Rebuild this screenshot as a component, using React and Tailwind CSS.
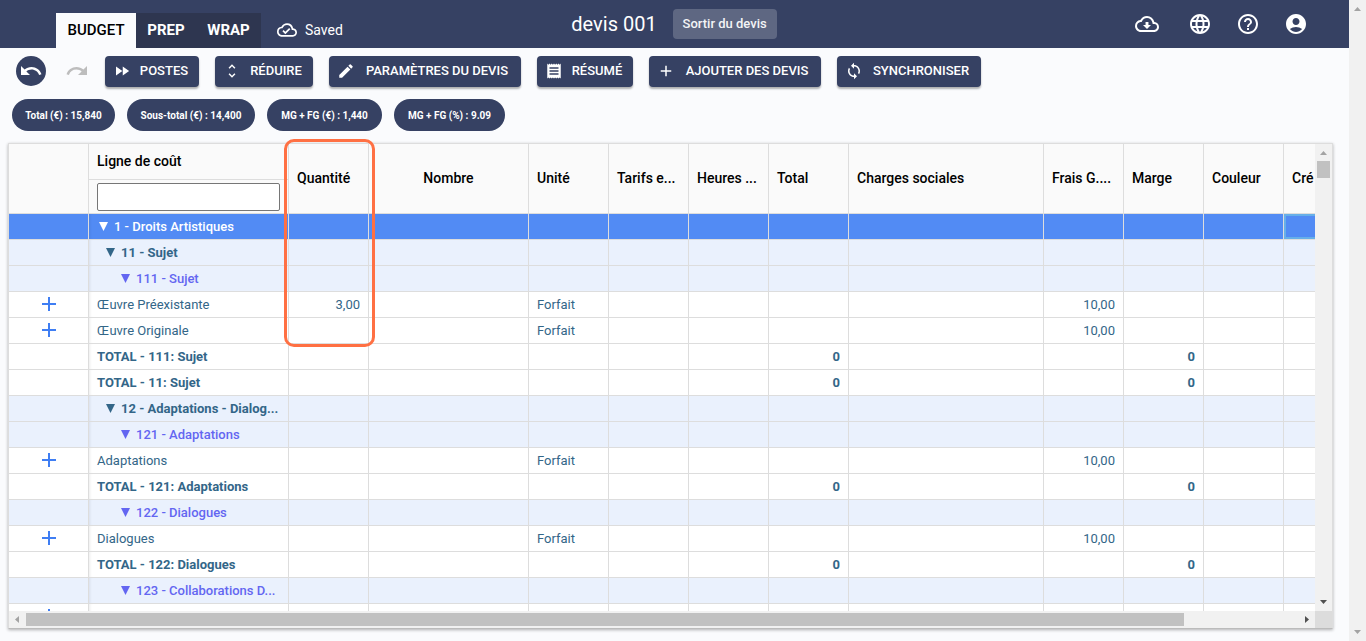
import { useState } from "react"
import clsx from "clsx"
import {
    MdAccountCircle,
    MdAdd,
    MdEdit,
    MdFastForward,
    MdHelpOutline,
    MdLanguage,
    MdOutlineCloudDone,
    MdOutlineCloudDownload,
    MdReceipt,
    MdRedo,
    MdSync,
    MdUndo,
    MdUnfoldMore,
} from "react-icons/md"

const actions = [
    { label: "POSTES", icon: MdFastForward, width: "min-w-[94px]" },
    { label: "RÉDUIRE", icon: MdUnfoldMore, width: "min-w-[98px]" },
    { label: "PARAMÈTRES DU DEVIS", icon: MdEdit, width: "min-w-[192px]" },
    { label: "RÉSUMÉ", icon: MdReceipt, width: "min-w-[96px]" },
    { label: "AJOUTER DES DEVIS", icon: MdAdd, width: "min-w-[172px]" },
    { label: "SYNCHRONISER", icon: MdSync, width: "min-w-[144px]" },
]

const totals = [
    { text: "Total (€) : 15,840", width: "min-w-[103px]" },
    { text: "Sous-total (€) : 14,400", width: "min-w-[128px]" },
    { text: "MG + FG (€) : 1,440", width: "min-w-[115px]" },
    { text: "MG + FG (%) : 9.09", width: "min-w-[111px]" },
]

const columns = [
    { key: "quantity", label: "Quantité", width: "w-[80px]" },
    { key: "number", label: "Nombre", width: "w-[160px]", center: true },
    { key: "unit", label: "Unité", width: "w-[80px]", left: true },
    { key: "rate", label: "Tarifs e...", width: "w-[80px]" },
    { key: "hours", label: "Heures ...", width: "w-[80px]" },
    { key: "total", label: "Total", width: "w-[80px]" },
    { key: "charges", label: "Charges sociales", width: "w-[195px]" },
    { key: "fees", label: "Frais G....", width: "w-[80px]" },
    { key: "margin", label: "Marge", width: "w-[80px]" },
    { key: "color", label: "Couleur", width: "w-[80px]" },
    { key: "credit", label: "Cré", width: "w-[80px]" },
]

const rows = [
    { type: "category", label: "1 - Droits Artistiques" },
    { type: "group", label: "11 - Sujet" },
    { type: "account", label: "111 - Sujet" },
    { type: "line", label: "Œuvre Préexistante", quantity: "3,00", unit: "Forfait", fees: "10,00" },
    { type: "line", label: "Œuvre Originale", unit: "Forfait", fees: "10,00" },
    { type: "total", label: "TOTAL - 111: Sujet", total: "0", margin: "0" },
    { type: "total", label: "TOTAL - 11: Sujet", total: "0", margin: "0" },
    { type: "group", label: "12 - Adaptations - Dialog..." },
    { type: "account", label: "121 - Adaptations" },
    { type: "line", label: "Adaptations", unit: "Forfait", fees: "10,00" },
    { type: "total", label: "TOTAL - 121: Adaptations", total: "0", margin: "0" },
    { type: "account", label: "122 - Dialogues" },
    { type: "line", label: "Dialogues", unit: "Forfait", fees: "10,00" },
    { type: "total", label: "TOTAL - 122: Dialogues", total: "0", margin: "0" },
    { type: "account", label: "123 - Collaborations D..." },
    { type: "line", label: "" },
]

const rowStyles = {
    category: "bg-[#528bf4] text-white font-medium",
    group: "bg-[#eaf1fd] text-[#336688] font-bold",
    account: "bg-[#eaf1fd] text-[#6366f1] font-medium",
    line: "bg-white text-[#336688]",
    total: "bg-white text-[#336688] font-bold",
}

const indents = {
    category: "pl-[10px]",
    group: "pl-[17px]",
    account: "pl-8",
    line: "pl-2",
    total: "pl-2",
}

const Header = () => (
    <header className="h-12 shrink-0 bg-[#364163] text-white flex items-center">
        <div className="flex-1 h-full flex items-end pl-14">
            <nav className="h-[35px] flex text-[15px]">
                <a href="#budget" className="min-w-[80px] bg-[#fafbfd] text-black font-medium pb-px flex items-center justify-center">BUDGET</a>
                <a href="#prep" className="min-w-[60px] bg-[#2e3650] font-bold pb-px flex items-center justify-center">PREP</a>
                <a href="#wrap" className="min-w-[65px] bg-[#2e3650] font-bold pb-px flex items-center justify-center">WRAP</a>
            </nav>
            <div className="h-[35px] flex items-center gap-2 ml-4 pb-px text-sm">
                <MdOutlineCloudDone className="w-5 h-5" />
                <span>Saved</span>
            </div>
        </div>
        <div className="flex items-center gap-4">
            <h1 className="text-xl">devis 001</h1>
            <button className="h-[30px] min-w-[104px] rounded bg-[#5e6782] text-[13px] font-medium text-gray-100">Sortir du devis</button>
        </div>
        <div className="flex-1 flex justify-end items-center gap-6 pl-4 pr-[41px]">
            <button aria-label="Télécharger" className="mr-[5px]"><MdOutlineCloudDownload className="w-6 h-6" /></button>
            <button aria-label="Langue"><MdLanguage className="w-6 h-6" /></button>
            <button aria-label="Aide"><MdHelpOutline className="w-6 h-6" /></button>
            <button aria-label="Compte"><MdAccountCircle className="w-6 h-6" /></button>
        </div>
    </header>
)

const Toolbar = () => (
    <div className="flex items-start gap-4 px-4 pt-2">
        <button aria-label="Annuler" className="w-[30px] h-[30px] rounded-full bg-[#364163] text-white flex items-center justify-center">
            <MdUndo className="w-6 h-6" />
        </button>
        <button aria-label="Rétablir" disabled className="w-[27px] h-[30px] text-[#bdbdbd] flex items-center justify-end">
            <MdRedo className="w-6 h-6 shrink-0" />
        </button>
        {actions.map(({ label, icon: Icon, width }) => (
            <button key={label} className={clsx(width, "h-[31px] pl-2 pr-2 pb-px rounded bg-[#364163] text-white text-[13px] font-medium flex items-center shadow-[0_2px_2px_rgba(0,0,0,0.3)]")}>
                <Icon className="w-[18px] h-[18px] shrink-0" />
                <span className="flex-1 pl-1.5 text-center">{label}</span>
            </button>
        ))}
    </div>
)

const Totals = () => (
    <ul className="flex gap-3 px-3 pt-3">
        {totals.map(({ text, width }) => (
            <li key={text} className={clsx(width, "h-8 rounded-full bg-[#364163] text-white text-[10px] font-bold flex items-center justify-center")}>{text}</li>
        ))}
    </ul>
)

const Caret = () => (
    <svg viewBox="0 0 9 9" className="inline-block w-[9px] h-[9px] mr-1.5 align-baseline" aria-hidden="true">
        <polygon points="0,0 9,0 4.5,9" fill="currentColor" />
    </svg>
)

const BudgetTable = () => {
    const [filter, setFilter] = useState("")

    return (
        <table className="table-fixed w-[1355px] border-separate border-spacing-0 text-[13px]">
            <thead>
                <tr className="h-[70px] bg-[#fafafa] text-sm text-black text-left">
                    <th className="w-[80px] border-r border-b border-[#dddddd]"></th>
                    <th className="w-[200px] p-0 border-r border-b border-[#dddddd]">
                        <div className="h-9 px-2 pb-px flex items-center border-b border-[#dddddd] font-medium">
                            <label htmlFor="cost-line">Ligne de coût</label>
                        </div>
                        <div className="h-[33px] px-2 flex items-center">
                            <input
                                id="cost-line"
                                type="text"
                                value={filter}
                                onChange={(e) => setFilter(e.target.value)}
                                className="w-full h-7 px-1 bg-white border border-[#767676] rounded-xs font-normal"
                            />
                        </div>
                    </th>
                    {columns.map((col) => (
                        <th key={col.key} className={clsx(col.width, "px-2 pt-0 pb-0.5 border-r border-b border-[#dddddd] font-medium whitespace-nowrap", col.center && "text-center")}>
                            {col.label}
                        </th>
                    ))}
                </tr>
            </thead>
            <tbody>
                {rows.map((row, i) => (
                    <tr key={i} className={clsx("h-[26px]", rowStyles[row.type])}>
                        <td className="p-0 align-top border-r border-b border-[#dddddd]">
                            {row.type === "line" && (
                                <button aria-label="Ajouter une ligne" className="block mx-auto text-[#3f7ef3]">
                                    <MdAdd className="w-6 h-6" />
                                </button>
                            )}
                        </td>
                        <td className={clsx("py-0 pr-2 border-r border-b border-[#dddddd] shadow-[inset_3px_0_3px_-2px_rgba(0,0,0,0.08)] whitespace-nowrap", indents[row.type])}>
                            {["category", "group", "account"].includes(row.type) && <Caret />}
                            {row.label}
                        </td>
                        {columns.map((col) => (
                            <td
                                key={col.key}
                                className={clsx(
                                    "px-2 py-0 border-r border-b border-[#dddddd]",
                                    col.left ? "text-left" : "text-right",
                                    row.type === "category" && col.key === "credit" && "shadow-[inset_0_0_0_2px_#66afe9]"
                                )}
                            >
                                {row[col.key]}
                            </td>
                        ))}
                    </tr>
                ))}
            </tbody>
        </table>
    )
}

const Arrow = ({ points, color }) => (
    <svg viewBox="0 0 17 17" className="w-[17px] h-[17px] shrink-0" aria-hidden="true">
        <polygon points={points} fill={color} />
    </svg>
)

const App = () => (
    <div className="h-screen flex bg-[#fafbfd] font-[Roboto,'Liberation_Sans',sans-serif] overflow-hidden">
        <div className="flex-1 min-w-0 flex flex-col">
            <Header />
            <Toolbar />
            <Totals />
            <main className="relative flex-1 min-h-0 flex flex-col mt-3 mb-3 ml-2 mr-4 border border-[#dddddd] border-b-[#bbbbbb] shadow-[0_1px_3px_rgba(0,0,0,0.3)]">
                <div className="flex-1 min-h-0 flex">
                    <div className="flex-1 min-w-0 overflow-hidden">
                        <BudgetTable />
                    </div>
                    <div className="w-[17px] shrink-0 bg-[#f1f1f1] flex flex-col items-center">
                        <Arrow points="5,11 8.5,7 12,11" color="#a3a3a3" />
                        <div className="w-[13px] h-[17px] bg-[#c1c1c1]"></div>
                        <div className="flex-1"></div>
                        <Arrow points="5,6 8.5,10 12,6" color="#505050" />
                    </div>
                </div>
                <div className="h-[17px] shrink-0 flex items-center bg-[#f1f1f1]">
                    <Arrow points="10,5 6,8.5 10,12" color="#a3a3a3" />
                    <div className="flex-1 flex">
                        <div className="w-[91%] h-[13px] bg-[#c1c1c1]"></div>
                    </div>
                    <Arrow points="7,5 11,8.5 7,12" color="#505050" />
                    <div className="w-[17px] h-[17px] bg-[#dcdcdc]"></div>
                </div>
                {/* highlight over the quantity column */}
                <div className="absolute -top-[5px] left-[275px] w-[91px] h-52 border-3 border-[#ff7043] rounded-[10px] pointer-events-none"></div>
            </main>
        </div>
        <div className="w-[17px] shrink-0 bg-[#f1f1f1] flex flex-col justify-between">
            <Arrow points="5,11 8.5,7 12,11" color="#a3a3a3" />
            <Arrow points="5,6 8.5,10 12,6" color="#a3a3a3" />
        </div>
    </div>
)

export default App
